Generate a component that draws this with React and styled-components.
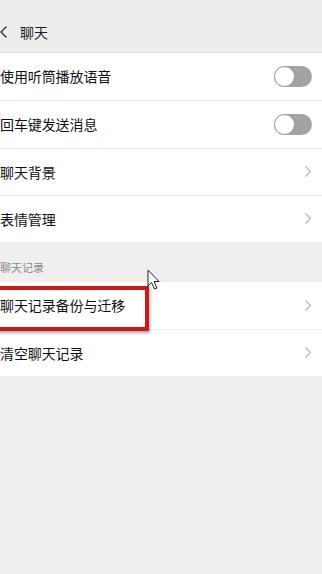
import React from "react";
import styled, { createGlobalStyle } from "styled-components";

const Global = createGlobalStyle`
  html, body { margin: 0; padding: 0; background: #efefef; }
  body { font-family: "Noto Sans CJK SC", "Noto Sans", sans-serif; }
`;

const Page = styled.div`
  position: relative;
  width: 322px;
  height: 574px;
  background: #efefef;
  overflow: hidden;
`;

const Header = styled.div`
  display: flex;
  align-items: center;
  gap: 12px;
  background: #ededed;
  border-bottom: 1px solid #dcdcdc;
  padding-top: 11px;
  box-sizing: border-box;
  height: 53px;
`;

const Title = styled.span`
  font-size: 14px;
  color: #1c1c1c;
`;

const Group = styled.div`
  background: #ffffff;
`;

const Row = styled.div`
  height: ${(p) => p.$h || 47}px;
  display: flex;
  align-items: center;
  justify-content: space-between;
  padding-right: 10px;
  padding-bottom: 1px;
  box-sizing: border-box;
  border-top: ${(p) => (p.$first ? "none" : "1px solid #ececec")};
`;

const Label = styled.span`
  font-size: 14px;
  color: #111;
  letter-spacing: -0.1px;
`;

const Toggle = styled.div`
  width: 38px;
  height: 21px;
  border-radius: 11px;
  background: #a3a3a3;
  position: relative;
  &::before {
    content: "";
    position: absolute;
    left: 0;
    top: 0;
    width: 19px;
    height: 19px;
    border-radius: 50%;
    background: #fff;
    border: 1px solid #9c9c9c;
  }
`;

const SectionLabel = styled.div`
  height: 40px;
  display: flex;
  align-items: flex-end;
  padding-bottom: 7px;
  box-sizing: border-box;
  font-size: 11px;
  color: #8a8a8a;
`;

const Highlight = styled.div`
  position: absolute;
  left: -4px;
  top: 286px;
  width: 153px;
  height: 45px;
  border: 4px solid #d01818;
  box-sizing: border-box;
  box-shadow: 1px 2px 3px rgba(0, 0, 0, 0.35);
  pointer-events: none;
`;

const Cursor = styled.svg`
  position: absolute;
  left: 147px;
  top: 269px;
`;

const Chevron = () => (
  <svg width="8" height="13" viewBox="0 0 8 13">
    <path d="M1.5 1.5 L6.5 6.5 L1.5 11.5" fill="none" stroke="#b5b5b5" strokeWidth="1.2" />
  </svg>
);

const Back = () => (
  <svg width="8" height="14" viewBox="0 0 8 14">
    <path d="M6.5 1.5 L1 7 L6.5 12.5" fill="none" stroke="#333" strokeWidth="1.4" />
  </svg>
);

export default function App() {
  return (
    <Page>
      <Global />
      <Header>
        <Back />
        <Title>聊天</Title>
      </Header>
      <Group>
        <Row $first $h={47}>
          <Label>使用听筒播放语音</Label>
          <Toggle />
        </Row>
        <Row $h={48}>
          <Label>回车键发送消息</Label>
          <Toggle />
        </Row>
        <Row $h={47}>
          <Label>聊天背景</Label>
          <Chevron />
        </Row>
        <Row $h={47}>
          <Label>表情管理</Label>
          <Chevron />
        </Row>
      </Group>
      <SectionLabel>聊天记录</SectionLabel>
      <Group>
        <Row $first $h={47}>
          <Label>聊天记录备份与迁移</Label>
          <Chevron />
        </Row>
        <Row $h={47}>
          <Label>清空聊天记录</Label>
          <Chevron />
        </Row>
      </Group>
      <Highlight />
      <Cursor width="14" height="22" viewBox="0 0 14 22">
        <path d="M1 1 L1 17 L4.5 13.5 L7.5 20 L10 19 L7 12.5 L12 12.5 Z" fill="#fff" stroke="#222" strokeWidth="1" />
      </Cursor>
    </Page>
  );
}
